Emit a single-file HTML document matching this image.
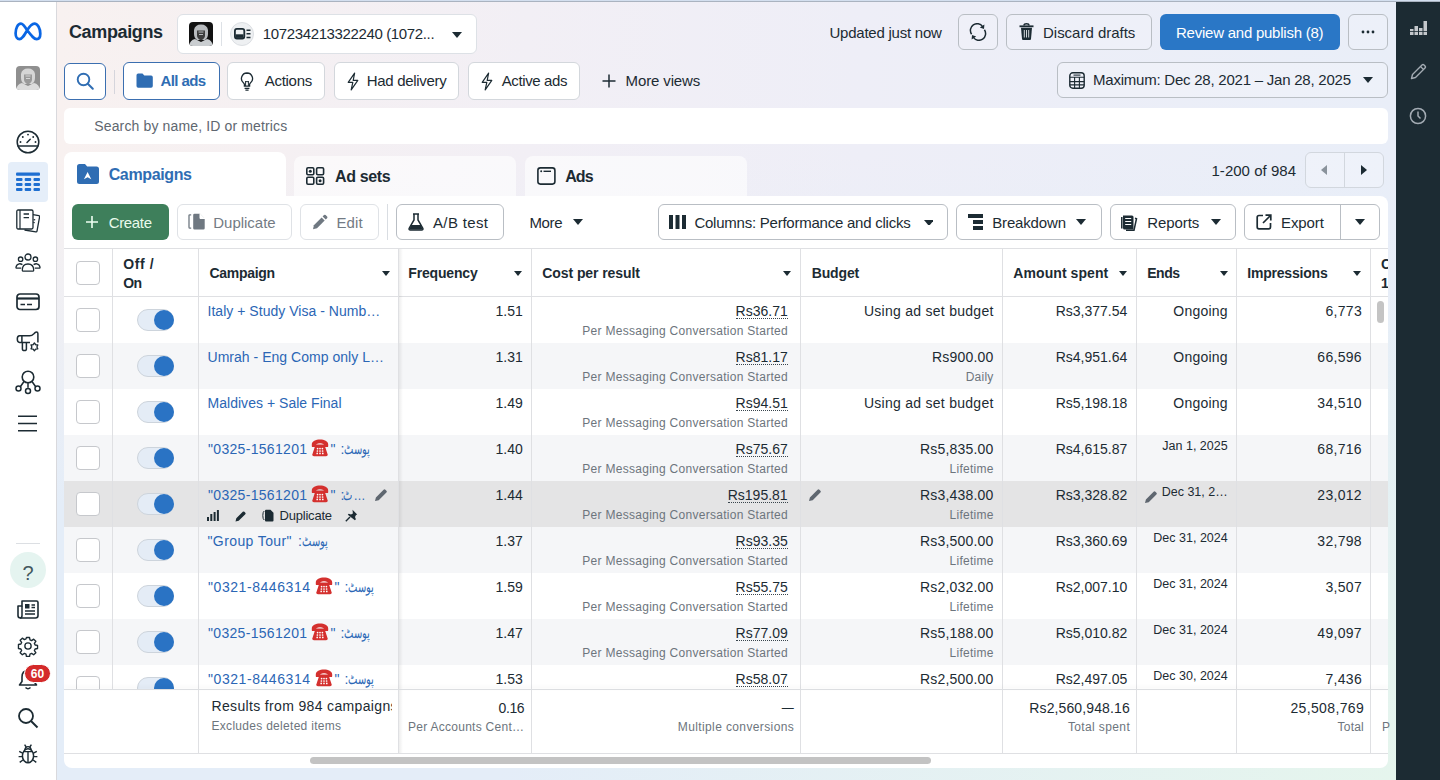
<!DOCTYPE html>
<html><head><meta charset="utf-8">
<style>
*{box-sizing:border-box;margin:0;padding:0}
html,body{width:1440px;height:780px;overflow:hidden;font-family:"Liberation Sans",sans-serif;color:#1c2b33;background:#fff}
.a{position:absolute}
.t{position:absolute;white-space:nowrap}
svg{display:block}
</style></head><body>

<div class="a" style="left:57px;top:0px;width:1339px;height:780px;background:radial-gradient(ellipse 900px 500px at 100% 100%,rgba(229,245,237,1) 0%,rgba(229,245,237,0) 100%),linear-gradient(180deg,rgba(228,237,248,0) 20%,rgba(228,237,248,1) 65%),linear-gradient(90deg,#f8f1f0 0%,#f2eff5 35%,#eeeef7 60%,#e9eef8 100%)"></div>
<div class="a" style="left:0px;top:2px;width:56px;height:778px;background:#fff"></div>
<div class="a" style="left:56px;top:2px;width:1px;height:778px;background:#d9d9dd"></div>
<div class="a" style="left:1396px;top:0px;width:44px;height:780px;background:#1c2b33"></div>
<div class="a" style="left:0px;top:0px;width:1440px;height:1px;background:#d3dfef"></div>
<div class="a" style="left:0px;top:1px;width:1440px;height:1px;background:#aab3c0"></div>
<div class="t" style="top:23.26px;font-size:18px;line-height:18px;font-weight:700;letter-spacing:-0.375px;left:69.00px;">Campaigns</div>
<div class="a" style="left:177px;top:14px;width:300px;height:40px;background:#fff;border:1px solid #dde1e6;border-radius:6px"></div>
<svg class="a" style="left:189px;top:22px;" width="24" height="24" viewBox="0 0 24 24" fill="none"><defs><clipPath id="avc1"><rect width="24" height="24" rx="4"/></clipPath></defs><g clip-path="url(#avc1)"><rect width="24" height="24" fill="#121212"/><path d="M5 8Q6 2.5 12 2.5T19 8v4q0 2-1 4l-2 2H8l-2-2q-1-2-1-4z" fill="#b9bcbf"/><path d="M8 8.5h8v5q0 3-4 5-4-2-4-5z" fill="#3d3d3d"/><path d="M9.5 10h5M10 12.5h4" stroke="#b9bcbf" stroke-width="1"/><path d="M0 24q1-6 6-7l6 3 6-3q5 1 6 7z" fill="#c9cdd0"/></g></svg>
<div class="a" style="left:221px;top:22px;width:1px;height:24px;background:#dde1e6"></div>
<div class="a" style="left:230px;top:22px;width:24px;height:24px;background:#eef0f2;border-radius:50%;border:1px solid #dcdfe3"></div>
<svg class="a" style="left:234px;top:28px;" width="17" height="12" viewBox="0 0 17 12" fill="none"><rect x="0.9" y="0.9" width="9.4" height="9.6" rx="2" stroke="#1c2b33" stroke-width="1.8"/><rect x="1.5" y="6.3" width="8" height="3.6" fill="#1c2b33"/><path d="M12.5 2.3h4M12.5 5.8h4M12.5 9.5h4" stroke="#1c2b33" stroke-width="1.6"/></svg>
<div class="t" style="top:25.90px;font-size:15px;line-height:15px;letter-spacing:-0.366px;left:262.80px;">107234213322240 (1072...</div>
<svg class="a" style="left:452px;top:32px;" width="10" height="6" viewBox="0 0 10 6" fill="none"><path d="M0 0h10L5 6z" fill="#1c2b33"/></svg>
<div class="t" style="top:24.50px;font-size:15px;line-height:15px;letter-spacing:-0.233px;left:829.50px;">Updated just now</div>
<div class="a" style="left:958px;top:14px;width:40px;height:36px;border:1px solid #b9bec4;border-radius:6px;background:rgba(255,255,255,0.15)"></div>
<svg class="a" style="left:969px;top:23px;" width="18" height="18" viewBox="0 0 18 18" fill="none"><path d="M2.6 11.2A6.6 6.6 0 0 1 13.6 3.6M15.4 6.8A6.6 6.6 0 0 1 4.4 14.4" stroke="#1c2b33" stroke-width="1.5" fill="none"/><path d="M15.4 1.6l-.4 4.4-4.2-1.4z" fill="#1c2b33"/><path d="M2.6 16.4l.4-4.4 4.2 1.4z" fill="#1c2b33"/></svg>
<div class="a" style="left:1006px;top:14px;width:146px;height:36px;border:1px solid #b9bec4;border-radius:6px;background:rgba(255,255,255,0.15)"></div>
<svg class="a" style="left:1019px;top:23px;" width="15" height="17" viewBox="0 0 15 17" fill="none"><path d="M.5 3.3h14" stroke="#1c2b33" stroke-width="1.8"/><path d="M5 2.5Q5 .8 7.5 .8T10 2.5" stroke="#1c2b33" stroke-width="1.5"/><path d="M2 4.8h11l-1 11.2q-.1 1-1 1H4q-.9 0-1-1z" fill="#1c2b33"/><path d="M5.3 7v7.5M7.5 7v7.5M9.7 7v7.5" stroke="#e8ebee" stroke-width=".9"/></svg>
<div class="t" style="top:24.70px;font-size:15px;line-height:15px;letter-spacing:-0.015px;left:1043.00px;">Discard drafts</div>
<div class="a" style="left:1160px;top:14px;width:180px;height:36px;background:#2a77c6;border-radius:6px"></div>
<div class="t" style="top:24.70px;font-size:15px;line-height:15px;color:#fff;letter-spacing:-0.239px;left:1176.00px;">Review and publish (8)</div>
<div class="a" style="left:1348px;top:14px;width:40px;height:36px;border:1px solid #b9bec4;border-radius:6px;background:rgba(255,255,255,0.15)"></div>
<svg class="a" style="left:1359px;top:30px;" width="18" height="4" viewBox="0 0 18 4" fill="none"><circle cx="4" cy="2" r="1.4" fill="#1c2b33"/><circle cx="9" cy="2" r="1.4" fill="#1c2b33"/><circle cx="14" cy="2" r="1.4" fill="#1c2b33"/></svg>
<div class="a" style="left:64px;top:63px;width:42px;height:37px;background:#fff;border:1px solid #3b6fb0;border-radius:6px"></div>
<svg class="a" style="left:76px;top:72px;" width="19" height="19" viewBox="0 0 19 19" fill="none"><circle cx="7.5" cy="7.5" r="5.8" stroke="#2f6db3" stroke-width="1.9"/><path d="M11.8 11.8l5 5" stroke="#2f6db3" stroke-width="2" stroke-linecap="round"/></svg>
<div class="a" style="left:114px;top:70px;width:1px;height:24px;background:#d5d5dc"></div>
<div class="a" style="left:123px;top:62px;width:97px;height:38px;background:#fff;border:1px solid #3b6fb0;border-radius:6px"></div>
<svg class="a" style="left:136px;top:73px;" width="17" height="15" viewBox="0 0 17 15" fill="none"><path d="M0.5 2.2q0-1.7 1.7-1.7h4.3l1.8 2h6.8q1.7 0 1.7 1.7v8.9q0 1.7-1.7 1.7H2.2q-1.7 0-1.7-1.7z" fill="#2f6db3"/></svg>
<div class="t" style="top:73.10px;font-size:15px;line-height:15px;font-weight:700;color:#2f6db3;letter-spacing:-0.604px;left:160.50px;">All ads</div>
<div class="a" style="left:227px;top:62px;width:98px;height:38px;background:#fff;border:1px solid #d3d7dc;border-radius:6px"></div>
<div class="a" style="left:334px;top:62px;width:125px;height:38px;background:#fff;border:1px solid #d3d7dc;border-radius:6px"></div>
<div class="a" style="left:468px;top:62px;width:112px;height:38px;background:#fff;border:1px solid #d3d7dc;border-radius:6px"></div>
<svg class="a" style="left:240px;top:72px;" width="14" height="19" viewBox="0 0 14 19" fill="none"><path d="M7 1a5.6 5.6 0 0 0-3.4 10c.5.4.8 1 .8 1.6v1.6h5.2v-1.6c0-.6.3-1.2.8-1.6A5.6 5.6 0 0 0 7 1z" stroke="#1c2b33" stroke-width="1.3"/><path d="M4.6 16.3h4.8M5.4 18.2h3.2" stroke="#1c2b33" stroke-width="1.2"/><path d="M5.6 14V9.6M8.4 14V9.6M5 9.2l1 .9 1-.9 1 .9 1-.9" stroke="#1c2b33" stroke-width="1"/></svg>
<div class="t" style="top:73.10px;font-size:15px;line-height:15px;letter-spacing:-0.292px;left:264.75px;">Actions</div>
<svg class="a" style="left:346px;top:72px;" width="14" height="19" viewBox="0 0 14 19" fill="none"><path d="M8.6 1.2L2.2 10.3h4.6l-1.6 7.5 6.6-9.4H7.2l1.4-7.2z" stroke="#1c2b33" stroke-width="1.2" stroke-linejoin="round"/></svg>
<div class="t" style="top:73.10px;font-size:15px;line-height:15px;letter-spacing:-0.307px;left:366.70px;">Had delivery</div>
<svg class="a" style="left:480px;top:72px;" width="14" height="19" viewBox="0 0 14 19" fill="none"><path d="M8.6 1.2L2.2 10.3h4.6l-1.6 7.5 6.6-9.4H7.2l1.4-7.2z" stroke="#1c2b33" stroke-width="1.2" stroke-linejoin="round"/></svg>
<div class="t" style="top:73.10px;font-size:15px;line-height:15px;letter-spacing:-0.372px;left:501.70px;">Active ads</div>
<svg class="a" style="left:602px;top:74px;" width="14" height="14" viewBox="0 0 14 14" fill="none"><path d="M7 0.5v13M0.5 7h13" stroke="#1c2b33" stroke-width="1.5"/></svg>
<div class="t" style="top:73.10px;font-size:15px;line-height:15px;letter-spacing:-0.131px;left:625.60px;">More views</div>
<div class="a" style="left:1057px;top:62px;width:331px;height:36px;border:1px solid #b9bec4;border-radius:6px;background:rgba(255,255,255,0.2)"></div>
<svg class="a" style="left:1069px;top:72px;" width="16" height="17" viewBox="0 0 16 17" fill="none"><rect x=".8" y=".8" width="14.4" height="15.4" rx="3" stroke="#1c2b33" stroke-width="1.4"/><path d="M.8 5.3h14.4M.8 9.6h14.4M.8 12.9h14.4M5.6 5.3v10.9M10.4 5.3v10.9" stroke="#1c2b33" stroke-width="1.1"/><path d="M4.5 3.1h7" stroke="#1c2b33" stroke-width="1.1"/></svg>
<div class="t" style="top:72.30px;font-size:15px;line-height:15px;letter-spacing:-0.229px;left:1093.00px;">Maximum: Dec 28, 2021 – Jan 28, 2025</div>
<svg class="a" style="left:1363px;top:77px;" width="10" height="6" viewBox="0 0 10 6" fill="none"><path d="M0 0h10L5 6z" fill="#1c2b33"/></svg>
<div class="a" style="left:64px;top:108px;width:1324px;height:36px;background:#fff;border-radius:6px"></div>
<div class="t" style="top:118.65px;font-size:14px;line-height:14px;color:#606770;letter-spacing:0.138px;left:94.30px;">Search by name, ID or metrics</div>
<div class="a" style="left:64px;top:152px;width:222px;height:50px;background:#fff;border-radius:8px 8px 0 0"></div>
<svg class="a" style="left:77px;top:164px;" width="22" height="20" viewBox="0 0 22 20" fill="none"><path d="M0 2.5Q0 0 2.5 0h5.5l2.2 2.6h9.3q2.5 0 2.5 2.5v12.4q0 2.5-2.5 2.5h-17Q0 20 0 17.5z" fill="#2f6db3"/><path d="M10.6 7.9L14.3 15.2 10.6 13.3 6.9 15.2z" fill="#fff"/></svg>
<div class="t" style="top:167.46px;font-size:16px;line-height:16px;font-weight:700;color:#2f6db3;letter-spacing:-0.369px;left:108.70px;">Campaigns</div>
<div class="a" style="left:294px;top:156px;width:222px;height:41px;background:rgba(255,255,255,0.6);border-radius:8px 8px 0 0"></div>
<svg class="a" style="left:306px;top:167px;" width="19" height="18" viewBox="0 0 19 18" fill="none"><rect x="0.8" y="0.8" width="7" height="7" rx="1.2" stroke="#1c2b33" stroke-width="1.6"/><rect x="10.6" y="0.8" width="7" height="7" rx="1.2" stroke="#1c2b33" stroke-width="1.6"/><rect x="0.8" y="10.2" width="7" height="7" rx="1.2" stroke="#1c2b33" stroke-width="1.6"/><rect x="10.6" y="10.2" width="7" height="7" rx="1.2" stroke="#1c2b33" stroke-width="1.6"/><circle cx="4.3" cy="4.3" r="1.5" fill="#1c2b33"/><circle cx="14.1" cy="13.7" r="1.5" fill="#1c2b33"/></svg>
<div class="t" style="top:168.96px;font-size:16px;line-height:16px;font-weight:700;letter-spacing:-0.342px;left:335.00px;">Ad sets</div>
<div class="a" style="left:525px;top:156px;width:222px;height:41px;background:rgba(255,255,255,0.6);border-radius:8px 8px 0 0"></div>
<svg class="a" style="left:537px;top:167px;" width="19" height="18" viewBox="0 0 19 18" fill="none"><rect x="0.9" y="0.9" width="17" height="16.2" rx="2.5" stroke="#1c2b33" stroke-width="1.6"/><circle cx="4.2" cy="4.3" r="1" fill="#1c2b33"/><path d="M6.5 4.3h7.5" stroke="#1c2b33" stroke-width="1.4"/></svg>
<div class="t" style="top:168.96px;font-size:16px;line-height:16px;font-weight:700;letter-spacing:-0.875px;left:565.20px;">Ads</div>
<div class="t" style="top:162.50px;font-size:15px;line-height:15px;letter-spacing:0.023px;left:1211.50px;">1-200 of 984</div>
<div class="a" style="left:1305px;top:152px;width:79px;height:36px;border:1px solid #d2d7de;border-radius:6px;background:rgba(255,255,255,0.25)"></div>
<div class="a" style="left:1344px;top:152px;width:1px;height:36px;background:#d2d7de"></div>
<svg class="a" style="left:1321px;top:165px;" width="6" height="10" viewBox="0 0 6 10" fill="none"><path d="M6 0v10L0 5z" fill="#8a939c"/></svg>
<svg class="a" style="left:1361px;top:165px;" width="6" height="10" viewBox="0 0 6 10" fill="none"><path d="M0 0v10l6-5z" fill="#1c2b33"/></svg>
<div class="a" style="left:64px;top:196px;width:1324px;height:572px;background:#fff;border-radius:0 8px 8px 8px"></div>
<div class="a" style="left:72px;top:204px;width:97px;height:36px;background:#3e7f5b;border-radius:6px"></div>
<svg class="a" style="left:86px;top:216px;" width="12" height="12" viewBox="0 0 12 12" fill="none"><path d="M6 0v12M0 6h12" stroke="#eefff2" stroke-width="1.6"/></svg>
<div class="t" style="top:214.50px;font-size:15px;line-height:15px;color:#e9fbec;letter-spacing:-0.340px;left:108.70px;">Create</div>
<div class="a" style="left:177px;top:204px;width:115px;height:36px;border:1px solid #dfe2e6;border-radius:6px;background:#fff"></div>
<svg class="a" style="left:188px;top:213px;" width="18" height="17" viewBox="0 0 18 17" fill="none"><path d="M3.2 1.8H1.8Q1 1.8 1 2.6v11.6q0 .9.8.9h1.4" stroke="#6f7881" stroke-width="1.3"/><path d="M6.5 .8h5.6l4.6 4.6v9.8q0 1.3-1.3 1.3H6.5q-1.3 0-1.3-1.3V2.1q0-1.3 1.3-1.3z" fill="#6f7881"/><path d="M12 .5v5h5" fill="#fff" stroke="#fff" stroke-width="1"/></svg>
<div class="t" style="top:214.50px;font-size:15px;line-height:15px;color:#737b84;letter-spacing:-0.025px;left:213.30px;">Duplicate</div>
<div class="a" style="left:300px;top:204px;width:79px;height:36px;border:1px solid #dfe2e6;border-radius:6px;background:#fff"></div>
<svg class="a" style="left:312px;top:214px;" width="16" height="16" viewBox="0 0 16 16" fill="none"><path d="M1 15.2l.9-4L9.6 3.5l3.1 3.1L5 14.3z" fill="#6f7881"/><path d="M10.6 2.5l1.4-1.4q.8-.8 1.6 0l1.5 1.5q.8.8 0 1.6l-1.4 1.4z" fill="#6f7881"/></svg>
<div class="t" style="top:214.50px;font-size:15px;line-height:15px;color:#737b84;letter-spacing:0.142px;left:336.40px;">Edit</div>
<div class="a" style="left:387px;top:204px;width:1px;height:36px;background:#d9dde2"></div>
<div class="a" style="left:396px;top:204px;width:108px;height:36px;border:1px solid #b9bec4;border-radius:6px;background:#fff"></div>
<svg class="a" style="left:408px;top:213px;" width="16" height="18" viewBox="0 0 16 18" fill="none"><path d="M5 1h6M6 1v6L1.2 15.2Q.6 17 2.4 17h11.2q1.8 0 1.2-1.8L10 7V1" stroke="#1c2b33" stroke-width="1.5"/><path d="M3.2 12h9.6l1.6 3.6q.3 .9-.6 .9H2.2q-.9 0-.6-.9z" fill="#1c2b33"/></svg>
<div class="t" style="top:214.50px;font-size:15px;line-height:15px;letter-spacing:0.357px;left:433.00px;">A/B test</div>
<div class="t" style="top:214.50px;font-size:15px;line-height:15px;letter-spacing:-0.342px;left:529.40px;">More</div>
<svg class="a" style="left:573px;top:219px;" width="10" height="6" viewBox="0 0 10 6" fill="none"><path d="M0 0h10L5 6z" fill="#1c2b33"/></svg>
<div class="a" style="left:658px;top:204px;width:290px;height:36px;border:1px solid #b9bec4;border-radius:6px;background:#fff"></div>
<svg class="a" style="left:669px;top:215px;" width="17" height="14" viewBox="0 0 17 14" fill="none"><rect x="0" y="0" width="4" height="14" fill="#1c2b33"/><rect x="6.5" y="0" width="4" height="14" fill="#1c2b33"/><rect x="13" y="0" width="4" height="14" fill="#1c2b33"/></svg>
<div class="t" style="top:214.50px;font-size:15px;line-height:15px;letter-spacing:-0.236px;left:694.40px;">Columns: Performance and clicks</div>
<svg class="a" style="left:923.5px;top:219.5px;" width="9.5" height="5" viewBox="0 0 9.5 5" fill="none"><path d="M0 0h10L5 6z" fill="#1c2b33"/></svg>
<div class="a" style="left:956px;top:204px;width:146px;height:36px;border:1px solid #b9bec4;border-radius:6px;background:#fff"></div>
<svg class="a" style="left:968px;top:214px;" width="16" height="16" viewBox="0 0 16 16" fill="none"><rect x="0" y="0" width="15" height="4" fill="#1c2b33"/><rect x="5" y="6" width="10" height="4" fill="#1c2b33"/><rect x="5" y="12" width="10" height="4" fill="#1c2b33"/></svg>
<div class="t" style="top:214.50px;font-size:15px;line-height:15px;letter-spacing:-0.150px;left:992.20px;">Breakdown</div>
<svg class="a" style="left:1076px;top:219px;" width="10" height="6" viewBox="0 0 10 6" fill="none"><path d="M0 0h10L5 6z" fill="#1c2b33"/></svg>
<div class="a" style="left:1110px;top:204px;width:126px;height:36px;border:1px solid #b9bec4;border-radius:6px;background:#fff"></div>
<svg class="a" style="left:1121px;top:214px;" width="17" height="17" viewBox="0 0 17 17" fill="none"><path d="M2 1.5h9q1.5 0 1.5 1.5v12.5H3.5Q2 15.5 2 14z" fill="#1c2b33"/><path d="M4.2 4.5h6M4.2 7.5h6M4.2 10.5h6" stroke="#fff" stroke-width="1.2"/><path d="M14 4.2l1.5.5-2.5 11.5H5" stroke="#1c2b33" stroke-width="1.5"/><path d="M0.8 3v11.5" stroke="#1c2b33" stroke-width="1.5"/></svg>
<div class="t" style="top:214.50px;font-size:15px;line-height:15px;letter-spacing:-0.083px;left:1147.30px;">Reports</div>
<svg class="a" style="left:1211px;top:219px;" width="10" height="6" viewBox="0 0 10 6" fill="none"><path d="M0 0h10L5 6z" fill="#1c2b33"/></svg>
<div class="a" style="left:1244px;top:204px;width:136px;height:36px;border:1px solid #b9bec4;border-radius:6px;background:#fff"></div>
<div class="a" style="left:1340px;top:204px;width:1px;height:36px;background:#b9bec4"></div>
<svg class="a" style="left:1256px;top:214px;" width="16" height="16" viewBox="0 0 16 16" fill="none"><path d="M7 1.5H3Q1.2 1.5 1.2 3.3v9.7q0 1.8 1.8 1.8h9.7q1.8 0 1.8-1.8V9" stroke="#1c2b33" stroke-width="1.7"/><path d="M7 9l7.5-7.5M9.5 1.2h5.3v5.3" stroke="#1c2b33" stroke-width="1.7"/></svg>
<div class="t" style="top:214.50px;font-size:15px;line-height:15px;letter-spacing:-0.100px;left:1281.00px;">Export</div>
<svg class="a" style="left:1355px;top:219px;" width="10" height="6" viewBox="0 0 10 6" fill="none"><path d="M0 0h10L5 6z" fill="#1c2b33"/></svg>
<div class="a" style="left:64px;top:248px;width:1324px;height:1px;background:#dfe0e3"></div>
<div class="a" style="left:64px;top:296px;width:1324px;height:1px;background:#dfe0e3"></div>
<div class="a" style="left:64px;top:343px;width:1324px;height:46px;background:#f5f6f8"></div>
<div class="a" style="left:64px;top:435px;width:1324px;height:46px;background:#f5f6f8"></div>
<div class="a" style="left:64px;top:481px;width:1324px;height:46px;background:#e4e4e5"></div>
<div class="a" style="left:64px;top:527px;width:1324px;height:46px;background:#f5f6f8"></div>
<div class="a" style="left:64px;top:619px;width:1324px;height:46px;background:#f5f6f8"></div>
<div class="a" style="left:112px;top:249px;width:1px;height:441px;background:#dfe0e3"></div>
<div class="a" style="left:198px;top:249px;width:1px;height:441px;background:#dfe0e3"></div>
<div class="a" style="left:398px;top:249px;width:1px;height:441px;background:#dfe0e3"></div>
<div class="a" style="left:531px;top:249px;width:1px;height:441px;background:#dfe0e3"></div>
<div class="a" style="left:800px;top:249px;width:1px;height:441px;background:#dfe0e3"></div>
<div class="a" style="left:1002px;top:249px;width:1px;height:441px;background:#dfe0e3"></div>
<div class="a" style="left:1136px;top:249px;width:1px;height:441px;background:#dfe0e3"></div>
<div class="a" style="left:1236px;top:249px;width:1px;height:441px;background:#dfe0e3"></div>
<div class="a" style="left:1370px;top:249px;width:1px;height:441px;background:#dfe0e3"></div>
<div class="a" style="left:399px;top:249px;width:4px;height:441px;background:linear-gradient(90deg,rgba(0,0,0,0.07),rgba(0,0,0,0))"></div>
<div class="a" style="left:76px;top:261px;width:24px;height:24px;border:1px solid #c6c8cc;border-radius:4px;background:#fff"></div>
<div class="t" style="top:256.95px;font-size:14px;line-height:14px;font-weight:700;letter-spacing:0.625px;left:123.25px;">Off /</div>
<div class="t" style="top:276.15px;font-size:14px;line-height:14px;font-weight:700;letter-spacing:-0.750px;left:123.25px;">On</div>
<div class="t" style="top:265.75px;font-size:14px;line-height:14px;font-weight:700;letter-spacing:-0.304px;left:209.50px;">Campaign</div>
<svg class="a" style="left:382px;top:271px;" width="8" height="5" viewBox="0 0 8 5" fill="none"><path d="M0 0h8L4 5z" fill="#1c2b33"/></svg>
<div class="t" style="top:265.75px;font-size:14px;line-height:14px;font-weight:700;letter-spacing:-0.169px;left:408.30px;">Frequency</div>
<svg class="a" style="left:514px;top:271px;" width="8" height="5" viewBox="0 0 8 5" fill="none"><path d="M0 0h8L4 5z" fill="#1c2b33"/></svg>
<div class="t" style="top:265.75px;font-size:14px;line-height:14px;font-weight:700;letter-spacing:-0.084px;left:542.30px;">Cost per result</div>
<svg class="a" style="left:783px;top:271px;" width="8" height="5" viewBox="0 0 8 5" fill="none"><path d="M0 0h8L4 5z" fill="#1c2b33"/></svg>
<div class="t" style="top:266.45px;font-size:14px;line-height:14px;font-weight:700;letter-spacing:-0.130px;left:811.70px;">Budget</div>
<div class="t" style="top:265.75px;font-size:14px;line-height:14px;font-weight:700;letter-spacing:0.080px;left:1013.30px;">Amount spent</div>
<svg class="a" style="left:1119px;top:271px;" width="8" height="5" viewBox="0 0 8 5" fill="none"><path d="M0 0h8L4 5z" fill="#1c2b33"/></svg>
<div class="t" style="top:265.75px;font-size:14px;line-height:14px;font-weight:700;letter-spacing:-0.517px;left:1147.30px;">Ends</div>
<svg class="a" style="left:1220px;top:271px;" width="8" height="5" viewBox="0 0 8 5" fill="none"><path d="M0 0h8L4 5z" fill="#1c2b33"/></svg>
<div class="t" style="top:265.75px;font-size:14px;line-height:14px;font-weight:700;letter-spacing:-0.210px;left:1247.30px;">Impressions</div>
<svg class="a" style="left:1353px;top:271px;" width="8" height="5" viewBox="0 0 8 5" fill="none"><path d="M0 0h8L4 5z" fill="#1c2b33"/></svg>
<div class="a" style="left:1370px;top:249px;width:18px;height:47px;overflow:hidden">
<div class="t" style="top:7.95px;font-size:14px;line-height:14px;font-weight:700;left:11.00px;">C</div>
<div class="t" style="top:27.15px;font-size:14px;line-height:14px;font-weight:700;left:11.00px;">1</div>
</div>
<div class="a" style="left:0;top:297px;width:1440px;height:393px;overflow:hidden">
<div class="a" style="left:76px;top:11px;width:24px;height:24px;border:1px solid #c6c8cc;border-radius:4px;background:#fff"></div>
<div class="a" style="left:137px;top:12px;width:36.5px;height:21.5px;background:#e4ecf6;border:1px solid #cdd4dc;border-radius:11px"></div>
<div class="a" style="left:154px;top:12.800000000000011px;width:20px;height:20px;background:#2a73c4;border-radius:50%"></div>
<div class="t" style="top:6.95px;font-size:14px;line-height:14px;color:#2b66b5;letter-spacing:0.030px;left:207.50px;">Italy + Study Visa - Numb…</div>
<div class="t" style="top:6.95px;font-size:14px;line-height:14px;right:917.30px;">1.51</div>
<div class="t" style="top:6.95px;font-size:14px;line-height:14px;right:652.27px;border-bottom:1px dotted #39454d;">Rs36.71</div>
<div class="t" style="top:27.64px;font-size:12px;line-height:12px;color:#6d757d;letter-spacing:0.281px;right:652.04px;">Per Messaging Conversation Started</div>
<div class="t" style="top:6.95px;font-size:14px;line-height:14px;letter-spacing:0.270px;right:446.38px;">Using ad set budget</div>
<div class="t" style="top:6.95px;font-size:14px;line-height:14px;right:312.71px;">Rs3,377.54</div>
<div class="t" style="top:6.95px;font-size:14px;line-height:14px;letter-spacing:0.230px;right:212.13px;">Ongoing</div>
<div class="t" style="top:6.95px;font-size:14px;line-height:14px;letter-spacing:0.300px;right:77.96px;">6,773</div>
<div class="a" style="left:76px;top:57px;width:24px;height:24px;border:1px solid #c6c8cc;border-radius:4px;background:#fff"></div>
<div class="a" style="left:137px;top:58px;width:36.5px;height:21.5px;background:#e4ecf6;border:1px solid #cdd4dc;border-radius:11px"></div>
<div class="a" style="left:154px;top:58.80000000000001px;width:20px;height:20px;background:#2a73c4;border-radius:50%"></div>
<div class="t" style="top:52.95px;font-size:14px;line-height:14px;color:#2b66b5;letter-spacing:0.030px;left:207.50px;">Umrah - Eng Comp only L…</div>
<div class="t" style="top:52.95px;font-size:14px;line-height:14px;right:917.30px;">1.31</div>
<div class="t" style="top:52.95px;font-size:14px;line-height:14px;right:652.27px;border-bottom:1px dotted #39454d;">Rs81.17</div>
<div class="t" style="top:73.64px;font-size:12px;line-height:12px;color:#6d757d;letter-spacing:0.281px;right:652.04px;">Per Messaging Conversation Started</div>
<div class="t" style="top:52.95px;font-size:14px;line-height:14px;letter-spacing:0.200px;right:446.56px;">Rs900.00</div>
<div class="t" style="top:73.64px;font-size:12px;line-height:12px;color:#6d757d;letter-spacing:0.250px;right:446.40px;">Daily</div>
<div class="t" style="top:52.95px;font-size:14px;line-height:14px;right:312.71px;">Rs4,951.64</div>
<div class="t" style="top:52.95px;font-size:14px;line-height:14px;letter-spacing:0.230px;right:212.13px;">Ongoing</div>
<div class="t" style="top:52.95px;font-size:14px;line-height:14px;letter-spacing:0.300px;right:78.05px;">66,596</div>
<div class="a" style="left:76px;top:103px;width:24px;height:24px;border:1px solid #c6c8cc;border-radius:4px;background:#fff"></div>
<div class="a" style="left:137px;top:104px;width:36.5px;height:21.5px;background:#e4ecf6;border:1px solid #cdd4dc;border-radius:11px"></div>
<div class="a" style="left:154px;top:104.80000000000001px;width:20px;height:20px;background:#2a73c4;border-radius:50%"></div>
<div class="t" style="top:98.95px;font-size:14px;line-height:14px;color:#2b66b5;letter-spacing:0.030px;left:207.50px;">Maldives + Sale Final</div>
<div class="t" style="top:98.95px;font-size:14px;line-height:14px;right:917.30px;">1.49</div>
<div class="t" style="top:98.95px;font-size:14px;line-height:14px;right:652.27px;border-bottom:1px dotted #39454d;">Rs94.51</div>
<div class="t" style="top:119.64px;font-size:12px;line-height:12px;color:#6d757d;letter-spacing:0.281px;right:652.04px;">Per Messaging Conversation Started</div>
<div class="t" style="top:98.95px;font-size:14px;line-height:14px;letter-spacing:0.270px;right:446.38px;">Using ad set budget</div>
<div class="t" style="top:98.95px;font-size:14px;line-height:14px;right:312.71px;">Rs5,198.18</div>
<div class="t" style="top:98.95px;font-size:14px;line-height:14px;letter-spacing:0.230px;right:212.13px;">Ongoing</div>
<div class="t" style="top:98.95px;font-size:14px;line-height:14px;letter-spacing:0.300px;right:78.05px;">34,510</div>
<div class="a" style="left:76px;top:149px;width:24px;height:24px;border:1px solid #c6c8cc;border-radius:4px;background:#fff"></div>
<div class="a" style="left:137px;top:150px;width:36.5px;height:21.5px;background:#e4ecf6;border:1px solid #cdd4dc;border-radius:11px"></div>
<div class="a" style="left:154px;top:150.8px;width:20px;height:20px;background:#2a73c4;border-radius:50%"></div>
<div class="t" style="top:144.95px;font-size:14px;line-height:14px;color:#2b66b5;letter-spacing:0.312px;left:208.00px;">&quot;0325-1561201</div>
<svg class="a" style="left:311px;top:142px;" width="18" height="18" viewBox="0 0 18 18" fill="none"><path d="M4.6 5.6h8.8l3.2 9.6q.5 2-1.6 2H3q-2.1 0-1.6-2z" fill="#d4302e"/><path d="M.8 5.6C.8 2.2 4.8.6 9 .6s8.2 1.6 8.2 5v1.6q0 .9-.9.9h-2.7q-.9 0-.9-.9V5.3Q11 4.3 9 4.3T5.3 5.3v1.9q0 .9-.9.9H1.7q-.9 0-.9-.9z" fill="#d4302e"/><g fill="#fff"><circle cx="6.6" cy="9.6" r=".85"/><circle cx="9" cy="9.6" r=".85"/><circle cx="11.4" cy="9.6" r=".85"/><circle cx="6.4" cy="12" r=".85"/><circle cx="9" cy="12" r=".85"/><circle cx="11.6" cy="12" r=".85"/><circle cx="6.2" cy="14.4" r=".85"/><circle cx="9" cy="14.4" r=".85"/><circle cx="11.8" cy="14.4" r=".85"/></g></svg>
<div class="t" style="top:144.95px;font-size:14px;line-height:14px;color:#2b66b5;left:330.50px;">&quot;</div>
<div class="t" style="top:144.95px;font-size:14px;line-height:14px;color:#2b66b5;left:340.50px;">:</div>
<div class="t" style="top:144.10px;font-size:15px;line-height:15px;color:#2b66b5;direction:rtl;transform:scaleX(0.66);transform-origin:100% 50%;right:1070px;">پوسٹ</div>
<div class="t" style="top:144.95px;font-size:14px;line-height:14px;right:917.30px;">1.40</div>
<div class="t" style="top:144.95px;font-size:14px;line-height:14px;right:652.27px;border-bottom:1px dotted #39454d;">Rs75.67</div>
<div class="t" style="top:165.64px;font-size:12px;line-height:12px;color:#6d757d;letter-spacing:0.281px;right:652.04px;">Per Messaging Conversation Started</div>
<div class="t" style="top:144.95px;font-size:14px;line-height:14px;letter-spacing:0.200px;right:446.51px;">Rs5,835.00</div>
<div class="t" style="top:165.64px;font-size:12px;line-height:12px;color:#6d757d;letter-spacing:0.250px;right:446.43px;">Lifetime</div>
<div class="t" style="top:144.95px;font-size:14px;line-height:14px;right:312.71px;">Rs4,615.87</div>
<div class="t" style="top:143.42px;font-size:12.5px;line-height:12.5px;right:212.35px;">Jan 1, 2025</div>
<div class="t" style="top:144.95px;font-size:14px;line-height:14px;letter-spacing:0.300px;right:78.05px;">68,716</div>
<div class="a" style="left:76px;top:195px;width:24px;height:24px;border:1px solid #c6c8cc;border-radius:4px;background:#fff"></div>
<div class="a" style="left:137px;top:196px;width:36.5px;height:21.5px;background:#e4ecf6;border:1px solid #cdd4dc;border-radius:11px"></div>
<div class="a" style="left:154px;top:196.8px;width:20px;height:20px;background:#2a73c4;border-radius:50%"></div>
<div class="t" style="top:190.95px;font-size:14px;line-height:14px;color:#2b66b5;letter-spacing:0.312px;left:208.00px;">&quot;0325-1561201</div>
<svg class="a" style="left:311px;top:188px;" width="18" height="18" viewBox="0 0 18 18" fill="none"><path d="M4.6 5.6h8.8l3.2 9.6q.5 2-1.6 2H3q-2.1 0-1.6-2z" fill="#d4302e"/><path d="M.8 5.6C.8 2.2 4.8.6 9 .6s8.2 1.6 8.2 5v1.6q0 .9-.9.9h-2.7q-.9 0-.9-.9V5.3Q11 4.3 9 4.3T5.3 5.3v1.9q0 .9-.9.9H1.7q-.9 0-.9-.9z" fill="#d4302e"/><g fill="#fff"><circle cx="6.6" cy="9.6" r=".85"/><circle cx="9" cy="9.6" r=".85"/><circle cx="11.4" cy="9.6" r=".85"/><circle cx="6.4" cy="12" r=".85"/><circle cx="9" cy="12" r=".85"/><circle cx="11.6" cy="12" r=".85"/><circle cx="6.2" cy="14.4" r=".85"/><circle cx="9" cy="14.4" r=".85"/><circle cx="11.8" cy="14.4" r=".85"/></g></svg>
<div class="t" style="top:190.95px;font-size:14px;line-height:14px;color:#2b66b5;left:330.50px;">&quot;</div>
<div class="t" style="top:190.95px;font-size:14px;line-height:14px;color:#2b66b5;left:340.50px;">:</div>
<div class="t" style="top:190.10px;font-size:15px;line-height:15px;color:#2b66b5;direction:rtl;transform:scaleX(0.66);transform-origin:100% 50%;right:1088px;">ٹ</div>
<div class="t" style="top:192.64px;font-size:12px;line-height:12px;color:#2b66b5;letter-spacing:-1.000px;left:353.50px;">…</div>
<div class="t" style="top:190.95px;font-size:14px;line-height:14px;right:917.30px;">1.44</div>
<div class="t" style="top:190.95px;font-size:14px;line-height:14px;right:652.36px;border-bottom:1px dotted #39454d;">Rs195.81</div>
<div class="t" style="top:211.64px;font-size:12px;line-height:12px;color:#6d757d;letter-spacing:0.281px;right:652.04px;">Per Messaging Conversation Started</div>
<div class="t" style="top:190.95px;font-size:14px;line-height:14px;letter-spacing:0.200px;right:446.51px;">Rs3,438.00</div>
<div class="t" style="top:211.64px;font-size:12px;line-height:12px;color:#6d757d;letter-spacing:0.250px;right:446.43px;">Lifetime</div>
<div class="t" style="top:190.95px;font-size:14px;line-height:14px;right:312.71px;">Rs3,328.82</div>
<div class="t" style="top:189.42px;font-size:12.5px;line-height:12.5px;right:212.30px;">Dec 31, 2…</div>
<div class="t" style="top:190.95px;font-size:14px;line-height:14px;letter-spacing:0.300px;right:78.05px;">23,012</div>
<div class="a" style="left:76px;top:241px;width:24px;height:24px;border:1px solid #c6c8cc;border-radius:4px;background:#fff"></div>
<div class="a" style="left:137px;top:242px;width:36.5px;height:21.5px;background:#e4ecf6;border:1px solid #cdd4dc;border-radius:11px"></div>
<div class="a" style="left:154px;top:242.79999999999995px;width:20px;height:20px;background:#2a73c4;border-radius:50%"></div>
<div class="t" style="top:236.95px;font-size:14px;line-height:14px;color:#2b66b5;letter-spacing:0.395px;left:207.50px;">&quot;Group Tour&quot;</div>
<div class="t" style="top:236.95px;font-size:14px;line-height:14px;color:#2b66b5;left:298.00px;">:</div>
<div class="t" style="top:236.10px;font-size:15px;line-height:15px;color:#2b66b5;direction:rtl;transform:scaleX(0.66);transform-origin:100% 50%;right:1112.5px;">پوسٹ</div>
<div class="t" style="top:236.95px;font-size:14px;line-height:14px;right:917.30px;">1.37</div>
<div class="t" style="top:236.95px;font-size:14px;line-height:14px;right:652.27px;border-bottom:1px dotted #39454d;">Rs93.35</div>
<div class="t" style="top:257.64px;font-size:12px;line-height:12px;color:#6d757d;letter-spacing:0.281px;right:652.04px;">Per Messaging Conversation Started</div>
<div class="t" style="top:236.95px;font-size:14px;line-height:14px;letter-spacing:0.200px;right:446.51px;">Rs3,500.00</div>
<div class="t" style="top:257.64px;font-size:12px;line-height:12px;color:#6d757d;letter-spacing:0.250px;right:446.43px;">Lifetime</div>
<div class="t" style="top:236.95px;font-size:14px;line-height:14px;right:312.71px;">Rs3,360.69</div>
<div class="t" style="top:235.42px;font-size:12.5px;line-height:12.5px;right:212.32px;">Dec 31, 2024</div>
<div class="t" style="top:236.95px;font-size:14px;line-height:14px;letter-spacing:0.300px;right:78.05px;">32,798</div>
<div class="a" style="left:76px;top:287px;width:24px;height:24px;border:1px solid #c6c8cc;border-radius:4px;background:#fff"></div>
<div class="a" style="left:137px;top:288px;width:36.5px;height:21.5px;background:#e4ecf6;border:1px solid #cdd4dc;border-radius:11px"></div>
<div class="a" style="left:154px;top:288.79999999999995px;width:20px;height:20px;background:#2a73c4;border-radius:50%"></div>
<div class="t" style="top:282.95px;font-size:14px;line-height:14px;color:#2b66b5;letter-spacing:0.562px;left:208.00px;">&quot;0321-8446314</div>
<svg class="a" style="left:315px;top:280px;" width="18" height="18" viewBox="0 0 18 18" fill="none"><path d="M4.6 5.6h8.8l3.2 9.6q.5 2-1.6 2H3q-2.1 0-1.6-2z" fill="#d4302e"/><path d="M.8 5.6C.8 2.2 4.8.6 9 .6s8.2 1.6 8.2 5v1.6q0 .9-.9.9h-2.7q-.9 0-.9-.9V5.3Q11 4.3 9 4.3T5.3 5.3v1.9q0 .9-.9.9H1.7q-.9 0-.9-.9z" fill="#d4302e"/><g fill="#fff"><circle cx="6.6" cy="9.6" r=".85"/><circle cx="9" cy="9.6" r=".85"/><circle cx="11.4" cy="9.6" r=".85"/><circle cx="6.4" cy="12" r=".85"/><circle cx="9" cy="12" r=".85"/><circle cx="11.6" cy="12" r=".85"/><circle cx="6.2" cy="14.4" r=".85"/><circle cx="9" cy="14.4" r=".85"/><circle cx="11.8" cy="14.4" r=".85"/></g></svg>
<div class="t" style="top:282.95px;font-size:14px;line-height:14px;color:#2b66b5;left:334.50px;">&quot;</div>
<div class="t" style="top:282.95px;font-size:14px;line-height:14px;color:#2b66b5;left:344.50px;">:</div>
<div class="t" style="top:282.10px;font-size:15px;line-height:15px;color:#2b66b5;direction:rtl;transform:scaleX(0.66);transform-origin:100% 50%;right:1066px;">پوسٹ</div>
<div class="t" style="top:282.95px;font-size:14px;line-height:14px;right:917.30px;">1.59</div>
<div class="t" style="top:282.95px;font-size:14px;line-height:14px;right:652.27px;border-bottom:1px dotted #39454d;">Rs55.75</div>
<div class="t" style="top:303.64px;font-size:12px;line-height:12px;color:#6d757d;letter-spacing:0.281px;right:652.04px;">Per Messaging Conversation Started</div>
<div class="t" style="top:282.95px;font-size:14px;line-height:14px;letter-spacing:0.200px;right:446.51px;">Rs2,032.00</div>
<div class="t" style="top:303.64px;font-size:12px;line-height:12px;color:#6d757d;letter-spacing:0.250px;right:446.43px;">Lifetime</div>
<div class="t" style="top:282.95px;font-size:14px;line-height:14px;right:312.71px;">Rs2,007.10</div>
<div class="t" style="top:281.42px;font-size:12.5px;line-height:12.5px;right:212.32px;">Dec 31, 2024</div>
<div class="t" style="top:282.95px;font-size:14px;line-height:14px;letter-spacing:0.300px;right:77.96px;">3,507</div>
<div class="a" style="left:76px;top:333px;width:24px;height:24px;border:1px solid #c6c8cc;border-radius:4px;background:#fff"></div>
<div class="a" style="left:137px;top:334px;width:36.5px;height:21.5px;background:#e4ecf6;border:1px solid #cdd4dc;border-radius:11px"></div>
<div class="a" style="left:154px;top:334.79999999999995px;width:20px;height:20px;background:#2a73c4;border-radius:50%"></div>
<div class="t" style="top:328.95px;font-size:14px;line-height:14px;color:#2b66b5;letter-spacing:0.312px;left:208.00px;">&quot;0325-1561201</div>
<svg class="a" style="left:311px;top:326px;" width="18" height="18" viewBox="0 0 18 18" fill="none"><path d="M4.6 5.6h8.8l3.2 9.6q.5 2-1.6 2H3q-2.1 0-1.6-2z" fill="#d4302e"/><path d="M.8 5.6C.8 2.2 4.8.6 9 .6s8.2 1.6 8.2 5v1.6q0 .9-.9.9h-2.7q-.9 0-.9-.9V5.3Q11 4.3 9 4.3T5.3 5.3v1.9q0 .9-.9.9H1.7q-.9 0-.9-.9z" fill="#d4302e"/><g fill="#fff"><circle cx="6.6" cy="9.6" r=".85"/><circle cx="9" cy="9.6" r=".85"/><circle cx="11.4" cy="9.6" r=".85"/><circle cx="6.4" cy="12" r=".85"/><circle cx="9" cy="12" r=".85"/><circle cx="11.6" cy="12" r=".85"/><circle cx="6.2" cy="14.4" r=".85"/><circle cx="9" cy="14.4" r=".85"/><circle cx="11.8" cy="14.4" r=".85"/></g></svg>
<div class="t" style="top:328.95px;font-size:14px;line-height:14px;color:#2b66b5;left:330.50px;">&quot;</div>
<div class="t" style="top:328.95px;font-size:14px;line-height:14px;color:#2b66b5;left:340.50px;">:</div>
<div class="t" style="top:328.10px;font-size:15px;line-height:15px;color:#2b66b5;direction:rtl;transform:scaleX(0.66);transform-origin:100% 50%;right:1070px;">پوسٹ</div>
<div class="t" style="top:328.95px;font-size:14px;line-height:14px;right:917.30px;">1.47</div>
<div class="t" style="top:328.95px;font-size:14px;line-height:14px;right:652.27px;border-bottom:1px dotted #39454d;">Rs77.09</div>
<div class="t" style="top:349.64px;font-size:12px;line-height:12px;color:#6d757d;letter-spacing:0.281px;right:652.04px;">Per Messaging Conversation Started</div>
<div class="t" style="top:328.95px;font-size:14px;line-height:14px;letter-spacing:0.200px;right:446.51px;">Rs5,188.00</div>
<div class="t" style="top:349.64px;font-size:12px;line-height:12px;color:#6d757d;letter-spacing:0.250px;right:446.43px;">Lifetime</div>
<div class="t" style="top:328.95px;font-size:14px;line-height:14px;right:312.71px;">Rs5,010.82</div>
<div class="t" style="top:327.42px;font-size:12.5px;line-height:12.5px;right:212.32px;">Dec 31, 2024</div>
<div class="t" style="top:328.95px;font-size:14px;line-height:14px;letter-spacing:0.300px;right:78.05px;">49,097</div>
<div class="a" style="left:76px;top:379px;width:24px;height:24px;border:1px solid #c6c8cc;border-radius:4px;background:#fff"></div>
<div class="a" style="left:137px;top:380px;width:36.5px;height:21.5px;background:#e4ecf6;border:1px solid #cdd4dc;border-radius:11px"></div>
<div class="a" style="left:154px;top:380.79999999999995px;width:20px;height:20px;background:#2a73c4;border-radius:50%"></div>
<div class="t" style="top:374.95px;font-size:14px;line-height:14px;color:#2b66b5;letter-spacing:0.562px;left:208.00px;">&quot;0321-8446314</div>
<svg class="a" style="left:315px;top:372px;" width="18" height="18" viewBox="0 0 18 18" fill="none"><path d="M4.6 5.6h8.8l3.2 9.6q.5 2-1.6 2H3q-2.1 0-1.6-2z" fill="#d4302e"/><path d="M.8 5.6C.8 2.2 4.8.6 9 .6s8.2 1.6 8.2 5v1.6q0 .9-.9.9h-2.7q-.9 0-.9-.9V5.3Q11 4.3 9 4.3T5.3 5.3v1.9q0 .9-.9.9H1.7q-.9 0-.9-.9z" fill="#d4302e"/><g fill="#fff"><circle cx="6.6" cy="9.6" r=".85"/><circle cx="9" cy="9.6" r=".85"/><circle cx="11.4" cy="9.6" r=".85"/><circle cx="6.4" cy="12" r=".85"/><circle cx="9" cy="12" r=".85"/><circle cx="11.6" cy="12" r=".85"/><circle cx="6.2" cy="14.4" r=".85"/><circle cx="9" cy="14.4" r=".85"/><circle cx="11.8" cy="14.4" r=".85"/></g></svg>
<div class="t" style="top:374.95px;font-size:14px;line-height:14px;color:#2b66b5;left:334.50px;">&quot;</div>
<div class="t" style="top:374.95px;font-size:14px;line-height:14px;color:#2b66b5;left:344.50px;">:</div>
<div class="t" style="top:374.10px;font-size:15px;line-height:15px;color:#2b66b5;direction:rtl;transform:scaleX(0.66);transform-origin:100% 50%;right:1066px;">پوسٹ</div>
<div class="t" style="top:374.95px;font-size:14px;line-height:14px;right:917.30px;">1.53</div>
<div class="t" style="top:374.95px;font-size:14px;line-height:14px;right:652.27px;border-bottom:1px dotted #39454d;">Rs58.07</div>
<div class="t" style="top:395.64px;font-size:12px;line-height:12px;color:#6d757d;letter-spacing:0.281px;right:652.04px;">Per Messaging Conversation Started</div>
<div class="t" style="top:374.95px;font-size:14px;line-height:14px;letter-spacing:0.200px;right:446.51px;">Rs2,500.00</div>
<div class="t" style="top:374.95px;font-size:14px;line-height:14px;right:312.71px;">Rs2,497.05</div>
<div class="t" style="top:373.42px;font-size:12.5px;line-height:12.5px;right:212.32px;">Dec 30, 2024</div>
<div class="t" style="top:374.95px;font-size:14px;line-height:14px;letter-spacing:0.300px;right:77.96px;">7,436</div>
<svg class="a" style="left:374px;top:191px;" width="13" height="13" viewBox="0 0 13 13" fill="none"><path d="M1 13l.9-3.6L9.6 1.7q.9-.9 1.8 0l1 1q.9.9 0 1.8L4.7 12.2z" fill="#5f6770"/></svg>
<svg class="a" style="left:808px;top:191px;" width="13" height="13" viewBox="0 0 13 13" fill="none"><path d="M1 13l.9-3.6L9.6 1.7q.9-.9 1.8 0l1 1q.9.9 0 1.8L4.7 12.2z" fill="#5f6770"/></svg>
<svg class="a" style="left:1144px;top:193px;" width="13" height="13" viewBox="0 0 13 13" fill="none"><path d="M1 13l.9-3.6L9.6 1.7q.9-.9 1.8 0l1 1q.9.9 0 1.8L4.7 12.2z" fill="#5f6770"/></svg>
<svg class="a" style="left:207px;top:213px;" width="12" height="11" viewBox="0 0 12 11" fill="none"><rect x="0" y="7" width="2" height="4" fill="#1c2b33"/><rect x="3.3" y="4" width="2" height="7" fill="#1c2b33"/><rect x="6.6" y="2" width="2" height="9" fill="#1c2b33"/><rect x="9.9" y="0" width="2" height="11" fill="#1c2b33"/></svg>
<svg class="a" style="left:235px;top:213px;" width="12" height="12" viewBox="0 0 12 12" fill="none"><path d="M0.5 11.5l.8-3.2L7.8 1.8q.8-.8 1.6 0l.9.9q.8.8 0 1.6L3.7 10.7z" fill="#1c2b33"/></svg>
<svg class="a" style="left:262px;top:212px;" width="13" height="13" viewBox="0 0 13 13" fill="none"><path d="M2.2 2Q.8 3 .8 6.5t1.4 4.5" stroke="#1c2b33" stroke-width="1"/><path d="M4 .8h4.5l3 3v7.7q0 1-1 1H4q-1 0-1-1V1.8q0-1 1-1z" fill="#1c2b33"/></svg>
<div class="t" style="top:212.30px;font-size:13px;line-height:13px;letter-spacing:-0.206px;left:279.50px;">Duplicate</div>
<svg class="a" style="left:345px;top:212px;" width="13" height="13" viewBox="0 0 13 13" fill="none"><path d="M7.5 .8l4.7 4.7-1.2.6-1 1.9.9 2.3-1 .9L2.8 5.7l.9-1 2.3.9 1.9-1z" fill="#1c2b33"/><path d="M5 8l-4.2 4.2" stroke="#1c2b33" stroke-width="1.4"/></svg>
<div class="a" style="left:1377px;top:4px;width:7px;height:22px;background:#c4c4c4;border-radius:4px"></div>
</div>
<div class="a" style="left:64px;top:690px;width:1324px;height:63px;background:#fff"></div>
<div class="a" style="left:64px;top:689px;width:1324px;height:1px;background:#dcdee1;box-shadow:0 -2px 4px rgba(0,0,0,0.09)"></div>
<div class="a" style="left:64px;top:753px;width:1324px;height:1px;background:#dfe0e3"></div>
<div class="a" style="left:198px;top:690px;width:1px;height:63px;background:#dfe0e3"></div>
<div class="a" style="left:398px;top:690px;width:1px;height:63px;background:#dfe0e3"></div>
<div class="a" style="left:531px;top:690px;width:1px;height:63px;background:#dfe0e3"></div>
<div class="a" style="left:800px;top:690px;width:1px;height:63px;background:#dfe0e3"></div>
<div class="a" style="left:1002px;top:690px;width:1px;height:63px;background:#dfe0e3"></div>
<div class="a" style="left:1136px;top:690px;width:1px;height:63px;background:#dfe0e3"></div>
<div class="a" style="left:1236px;top:690px;width:1px;height:63px;background:#dfe0e3"></div>
<div class="a" style="left:1370px;top:690px;width:1px;height:63px;background:#dfe0e3"></div>
<div class="a" style="left:399px;top:690px;width:4px;height:63px;background:linear-gradient(90deg,rgba(0,0,0,0.07),rgba(0,0,0,0))"></div>
<div class="a" style="left:211px;top:690px;width:181px;height:40px;overflow:hidden">
<div class="t" style="top:9.40px;font-size:14px;line-height:14px;letter-spacing:0.345px;left:0.50px;">Results from 984 campaigns</div>
</div>
<div class="t" style="top:720.34px;font-size:12px;line-height:12px;color:#6d757d;letter-spacing:0.292px;left:211.50px;">Excludes deleted items</div>
<div class="t" style="top:700.85px;font-size:14px;line-height:14px;letter-spacing:-0.417px;right:915.81px;">0.16</div>
<div class="t" style="top:720.64px;font-size:12px;line-height:12px;color:#6d757d;letter-spacing:0.272px;left:408.00px;">Per Accounts Cent…</div>
<div class="t" style="top:702.34px;font-size:12px;line-height:12px;right:646.20px;">—</div>
<div class="t" style="top:720.84px;font-size:12px;line-height:12px;color:#6d757d;letter-spacing:0.382px;right:645.85px;">Multiple conversions</div>
<div class="t" style="top:700.65px;font-size:14px;line-height:14px;letter-spacing:0.117px;right:310.19px;">Rs2,560,948.16</div>
<div class="t" style="top:720.84px;font-size:12px;line-height:12px;color:#6d757d;letter-spacing:0.380px;right:309.88px;">Total spent</div>
<div class="t" style="top:700.65px;font-size:14px;line-height:14px;letter-spacing:0.364px;right:75.88px;">25,508,769</div>
<div class="t" style="top:720.84px;font-size:12px;line-height:12px;color:#6d757d;letter-spacing:0.206px;right:76.02px;">Total</div>
<div class="t" style="top:720.84px;font-size:12px;line-height:12px;color:#6d757d;left:1382.00px;">P</div>
<div class="a" style="left:310px;top:757px;width:621px;height:7px;background:#c3c3c3;border-radius:4px"></div>
<svg class="a" style="left:13px;top:21px;" width="30" height="21" viewBox="0 0 30 21" fill="none"><path d="M14 9C11.6 5 9.9 2.6 7.9 2.6 4.8 2.6 2.6 7.2 2.6 12.2c0 3.5 1.6 5.9 3.9 5.9 2.7 0 4.6-3.4 7.5-8.6C17 4.5 18.8 2.6 21.4 2.6c3.4 0 5.9 5 5.9 10.2 0 3.4-1.6 5.3-3.6 5.3C21 18.1 19 15.5 14 9z" stroke="#0a66e4" stroke-width="2.7" stroke-linejoin="round"/></svg>
<svg class="a" style="left:16px;top:66px;" width="24" height="24" viewBox="0 0 24 24" fill="none"><defs><clipPath id="avc2"><rect width="24" height="24" rx="4"/></clipPath></defs><g clip-path="url(#avc2)"><rect width="24" height="24" fill="#8f8f8f"/><path d="M5 8Q6 2.5 12 2.5T19 8v4q0 2-1 4l-2 2H8l-2-2q-1-2-1-4z" fill="#d6d6d6"/><path d="M8 8.5h8v5q0 3-4 5-4-2-4-5z" fill="#9a9a9a"/><path d="M9.5 10h5M10 12.5h4" stroke="#d6d6d6" stroke-width="1"/><path d="M0 24q1-6 6-7l6 3 6-3q5 1 6 7z" fill="#dcdcdc"/></g></svg>
<svg class="a" style="left:16px;top:130px;" width="24" height="24" viewBox="0 0 24 24" fill="none"><circle cx="12" cy="12" r="10.8" stroke="#1c2b33" stroke-width="1.5"/><path d="M1.5 16h21" stroke="#1c2b33" stroke-width="1.5"/><path d="M11 12.5l3.2-3.2" stroke="#1c2b33" stroke-width="1.5" stroke-linecap="round"/><circle cx="12" cy="4.6" r=".95" fill="#1c2b33"/><circle cx="6.8" cy="7" r=".95" fill="#1c2b33"/><circle cx="17.2" cy="7" r=".95" fill="#1c2b33"/><circle cx="4.5" cy="12" r=".95" fill="#1c2b33"/><circle cx="19.5" cy="12" r=".95" fill="#1c2b33"/></svg>
<div class="a" style="left:8px;top:162px;width:40px;height:40px;background:#e5eef9;border-radius:4px"></div>
<svg class="a" style="left:16px;top:172px;" width="24" height="20" viewBox="0 0 24 20" fill="none"><g fill="#1f6fd1"><rect x="0" y="0.5" width="24" height="3.2" rx="1"/><rect x="0" y="6" width="6.5" height="3" rx="1"/><rect x="8.7" y="6" width="6.5" height="3" rx="1"/><rect x="17.5" y="6" width="6.5" height="3" rx="1"/><rect x="0" y="11" width="6.5" height="3" rx="1"/><rect x="8.7" y="11" width="6.5" height="3" rx="1"/><rect x="17.5" y="11" width="6.5" height="3" rx="1"/><rect x="0" y="16" width="6.5" height="3" rx="1"/><rect x="8.7" y="16" width="6.5" height="3" rx="1"/><rect x="17.5" y="16" width="6.5" height="3" rx="1"/></g></svg>
<svg class="a" style="left:16px;top:209px;" width="24" height="26" viewBox="0 0 24 26" fill="none"><path d="M17 5.6l5.8 1.1q1 .2.8 1.2l-2.6 14.2q-.2 1-1.2.8L8.5 21" stroke="#1c2b33" stroke-width="1.3"/><path d="M17.6 10.6l1.6.3M17.3 13.4l1.4.3" stroke="#1c2b33" stroke-width="1.2"/><path d="M2.2 1h13.4q1.4 0 1.4 1.4v16.2q0 1.4-1.4 1.4H2.2Q.8 20 .8 18.6V2.4Q.8 1 2.2 1z" fill="#fff" stroke="#1c2b33" stroke-width="1.3"/><path d="M4 1v19" stroke="#1c2b33" stroke-width="1.2"/><path d="M7.6 5h5.4M7.6 8.6h5.4" stroke="#1c2b33" stroke-width="1.4"/></svg>
<svg class="a" style="left:15px;top:253px;" width="26" height="19" viewBox="0 0 26 19" fill="none"><circle cx="13" cy="4" r="3" stroke="#1c2b33" stroke-width="1.3"/><circle cx="5.6" cy="6.2" r="2.2" stroke="#1c2b33" stroke-width="1.3"/><circle cx="20.4" cy="6.2" r="2.2" stroke="#1c2b33" stroke-width="1.3"/><path d="M7.4 11.6Q5.8 10.6 4.2 10.8 1.4 11.2 1 14.2q-.1 1 .9 1h4.4M18.6 11.6q1.6-1 3.2-.8 2.8.4 3.2 3.4.1 1-.9 1h-4.4" stroke="#1c2b33" stroke-width="1.3"/><path d="M7.3 17.2q0-6.2 5.7-6.2t5.7 6.2q0 1-1 1H8.3q-1 0-1-1z" fill="#fff" stroke="#1c2b33" stroke-width="1.3"/></svg>
<svg class="a" style="left:16px;top:293px;" width="24" height="18" viewBox="0 0 24 18" fill="none"><rect x="1" y="1" width="22" height="15.5" rx="3" stroke="#1c2b33" stroke-width="1.7"/><path d="M1 5.5h22" stroke="#1c2b33" stroke-width="2.2"/><path d="M4.5 11.5h4.5M11 11.5h5" stroke="#1c2b33" stroke-width="1.4"/></svg>
<svg class="a" style="left:16px;top:330px;" width="24" height="22" viewBox="0 0 24 22" fill="none"><path d="M14 12.4H3.6Q1.3 12.4 1.3 9.1T3.6 5.8h10q2.3 0 4.3-2.1 1.4-1.8 2.5-1.8 1.5 0 1.5 1.6v8.9" stroke="#1c2b33" stroke-width="1.5" stroke-linejoin="round"/><path d="M5.9 5.8v6.6M6.4 12.4v6.6q0 1.6 2 1.6t2-1.6v-6.6" stroke="#1c2b33" stroke-width="1.5"/><path d="M18.40 13.00 L19.65 14.73 L21.78 14.95 L20.90 16.90 L21.78 18.85 L19.65 19.07 L18.40 20.80 L17.15 19.07 L15.02 18.85 L15.90 16.90 L15.02 14.95 L17.15 14.73z" stroke="#1c2b33" stroke-width="1.3" stroke-linejoin="round"/></svg>
<svg class="a" style="left:15px;top:370px;" width="26" height="25" viewBox="0 0 26 25" fill="none"><circle cx="13" cy="7" r="5.8" stroke="#1c2b33" stroke-width="1.6"/><path d="M13 12.8v5M9 11.5l-3.5 5M17 11.5l3.5 5" stroke="#1c2b33" stroke-width="1.5"/><circle cx="3.5" cy="18.5" r="2.5" stroke="#1c2b33" stroke-width="1.5"/><circle cx="13" cy="21" r="2.5" stroke="#1c2b33" stroke-width="1.5"/><circle cx="22.5" cy="18.5" r="2.5" stroke="#1c2b33" stroke-width="1.5"/></svg>
<svg class="a" style="left:18px;top:415px;" width="20" height="18" viewBox="0 0 20 18" fill="none"><path d="M0 1.2h19M0 8.5h19M0 15.8h19" stroke="#1c2b33" stroke-width="1.6"/></svg>
<div class="a" style="left:16px;top:543px;width:24px;height:1px;background:#dcdfe3"></div>
<div class="a" style="left:10px;top:552px;width:36px;height:36px;background:#e5f4f0;border-radius:50%"></div>
<div class="t" style="top:562.57px;font-size:20px;line-height:20px;color:#43585e;left:-272px;width:600px;text-align:center;">?</div>
<svg class="a" style="left:17px;top:600px;" width="22" height="19" viewBox="0 0 22 19" fill="none"><path d="M5 1h14.5q1.5 0 1.5 1.5v13q0 2.5-2.5 2.5H3.5Q1 18 1 15.5V6h4z" stroke="#1c2b33" stroke-width="1.6" stroke-linejoin="round"/><path d="M5 6v9.5q0 2.5-2 2.5" stroke="#1c2b33" stroke-width="1.5"/><rect x="8" y="4" width="4.5" height="4.5" fill="#1c2b33"/><path d="M14.5 5h3.5M14.5 7.5h3.5M8 11h10M8 14h10" stroke="#1c2b33" stroke-width="1.4"/></svg>
<svg class="a" style="left:17px;top:635px;" width="22" height="22" viewBox="0 0 22 22" fill="none"><g transform="translate(1.1 1.1) scale(.9)"><path d="M9.3 1.5h3.4l.5 2.7 1.8.8 2.3-1.6 2.4 2.4-1.6 2.3.8 1.8 2.7.5v3.4l-2.7.5-.8 1.8 1.6 2.3-2.4 2.4-2.3-1.6-1.8.8-.5 2.7H9.3l-.5-2.7-1.8-.8-2.3 1.6-2.4-2.4 1.6-2.3-.8-1.8-2.7-.5V9.3l2.7-.5.8-1.8-1.6-2.3 2.4-2.4 2.3 1.6 1.8-.8z" stroke="#1c2b33" stroke-width="1.5" stroke-linejoin="round"/><circle cx="11" cy="11" r="3.5" stroke="#1c2b33" stroke-width="1.5"/></g></svg>
<svg class="a" style="left:17px;top:668px;" width="22" height="22" viewBox="0 0 22 22" fill="none"><path d="M11 2.5q-6 0-6 6.5v4.5L2.5 17h17L17 13.5V9q0-6.5-6-6.5z" stroke="#1c2b33" stroke-width="1.6" stroke-linejoin="round"/><path d="M8.5 19.5q2.5 2.5 5 0" stroke="#1c2b33" stroke-width="1.5"/></svg>
<div class="a" style="left:24px;top:663.5px;width:27px;height:19px;background:#d42a2a;border-radius:10px;border:1.5px solid #fff"></div>
<div class="t" style="top:667.64px;font-size:12px;line-height:12px;font-weight:700;color:#fff;left:-262.5px;width:600px;text-align:center;">60</div>
<svg class="a" style="left:17px;top:707px;" width="22" height="22" viewBox="0 0 22 22" fill="none"><circle cx="9" cy="9" r="7" stroke="#1c2b33" stroke-width="1.8"/><path d="M14 14l6.5 6.5" stroke="#1c2b33" stroke-width="2"/></svg>
<svg class="a" style="left:17px;top:743px;" width="22" height="22" viewBox="0 0 22 22" fill="none"><ellipse cx="11" cy="12.8" rx="5.6" ry="7" stroke="#1c2b33" stroke-width="1.5"/><path d="M6.2 8.6h9.6M11 8.6v11" stroke="#1c2b33" stroke-width="1.4"/><path d="M7.8 7Q8.2 3.6 11 3.6T14.2 7" stroke="#1c2b33" stroke-width="1.4"/><path d="M9.2 4L7.6 1.6M12.8 4l1.6-2.4M5.6 10.2L2.2 8.4M5.4 13.6H1.6M5.9 17l-3.2 2.4M16.4 10.2l3.4-1.8M16.6 13.6h3.8M16.1 17l3.2 2.4" stroke="#1c2b33" stroke-width="1.4"/></svg>
<svg class="a" style="left:1410px;top:20px;" width="17" height="15" viewBox="0 0 17 15" fill="none"><g fill="#c4c8cc"><rect x="0" y="9" width="3.5" height="6"/><rect x="4.5" y="6" width="3.5" height="9"/><rect x="9" y="8" width="3.5" height="7"/><rect x="13.5" y="1" width="3.5" height="14"/></g><path d="M0 11.5h17" stroke="#1c2b33" stroke-width=".8"/></svg>
<svg class="a" style="left:1410px;top:63px;" width="17" height="17" viewBox="0 0 17 17" fill="none"><path d="M1.5 15.5l1-4L12 2q1-1 2 0l1 1q1 1 0 2L5.5 14.5z" stroke="#a3abb3" stroke-width="1.4" stroke-linejoin="round"/><path d="M10.5 3.5l3 3" stroke="#a3abb3" stroke-width="1.3"/></svg>
<svg class="a" style="left:1409px;top:107px;" width="18" height="18" viewBox="0 0 18 18" fill="none"><circle cx="9" cy="9" r="7.6" stroke="#a3abb3" stroke-width="1.5"/><path d="M9 4.5V9l2.5 2.5" stroke="#a3abb3" stroke-width="1.5"/></svg>
</body></html>
